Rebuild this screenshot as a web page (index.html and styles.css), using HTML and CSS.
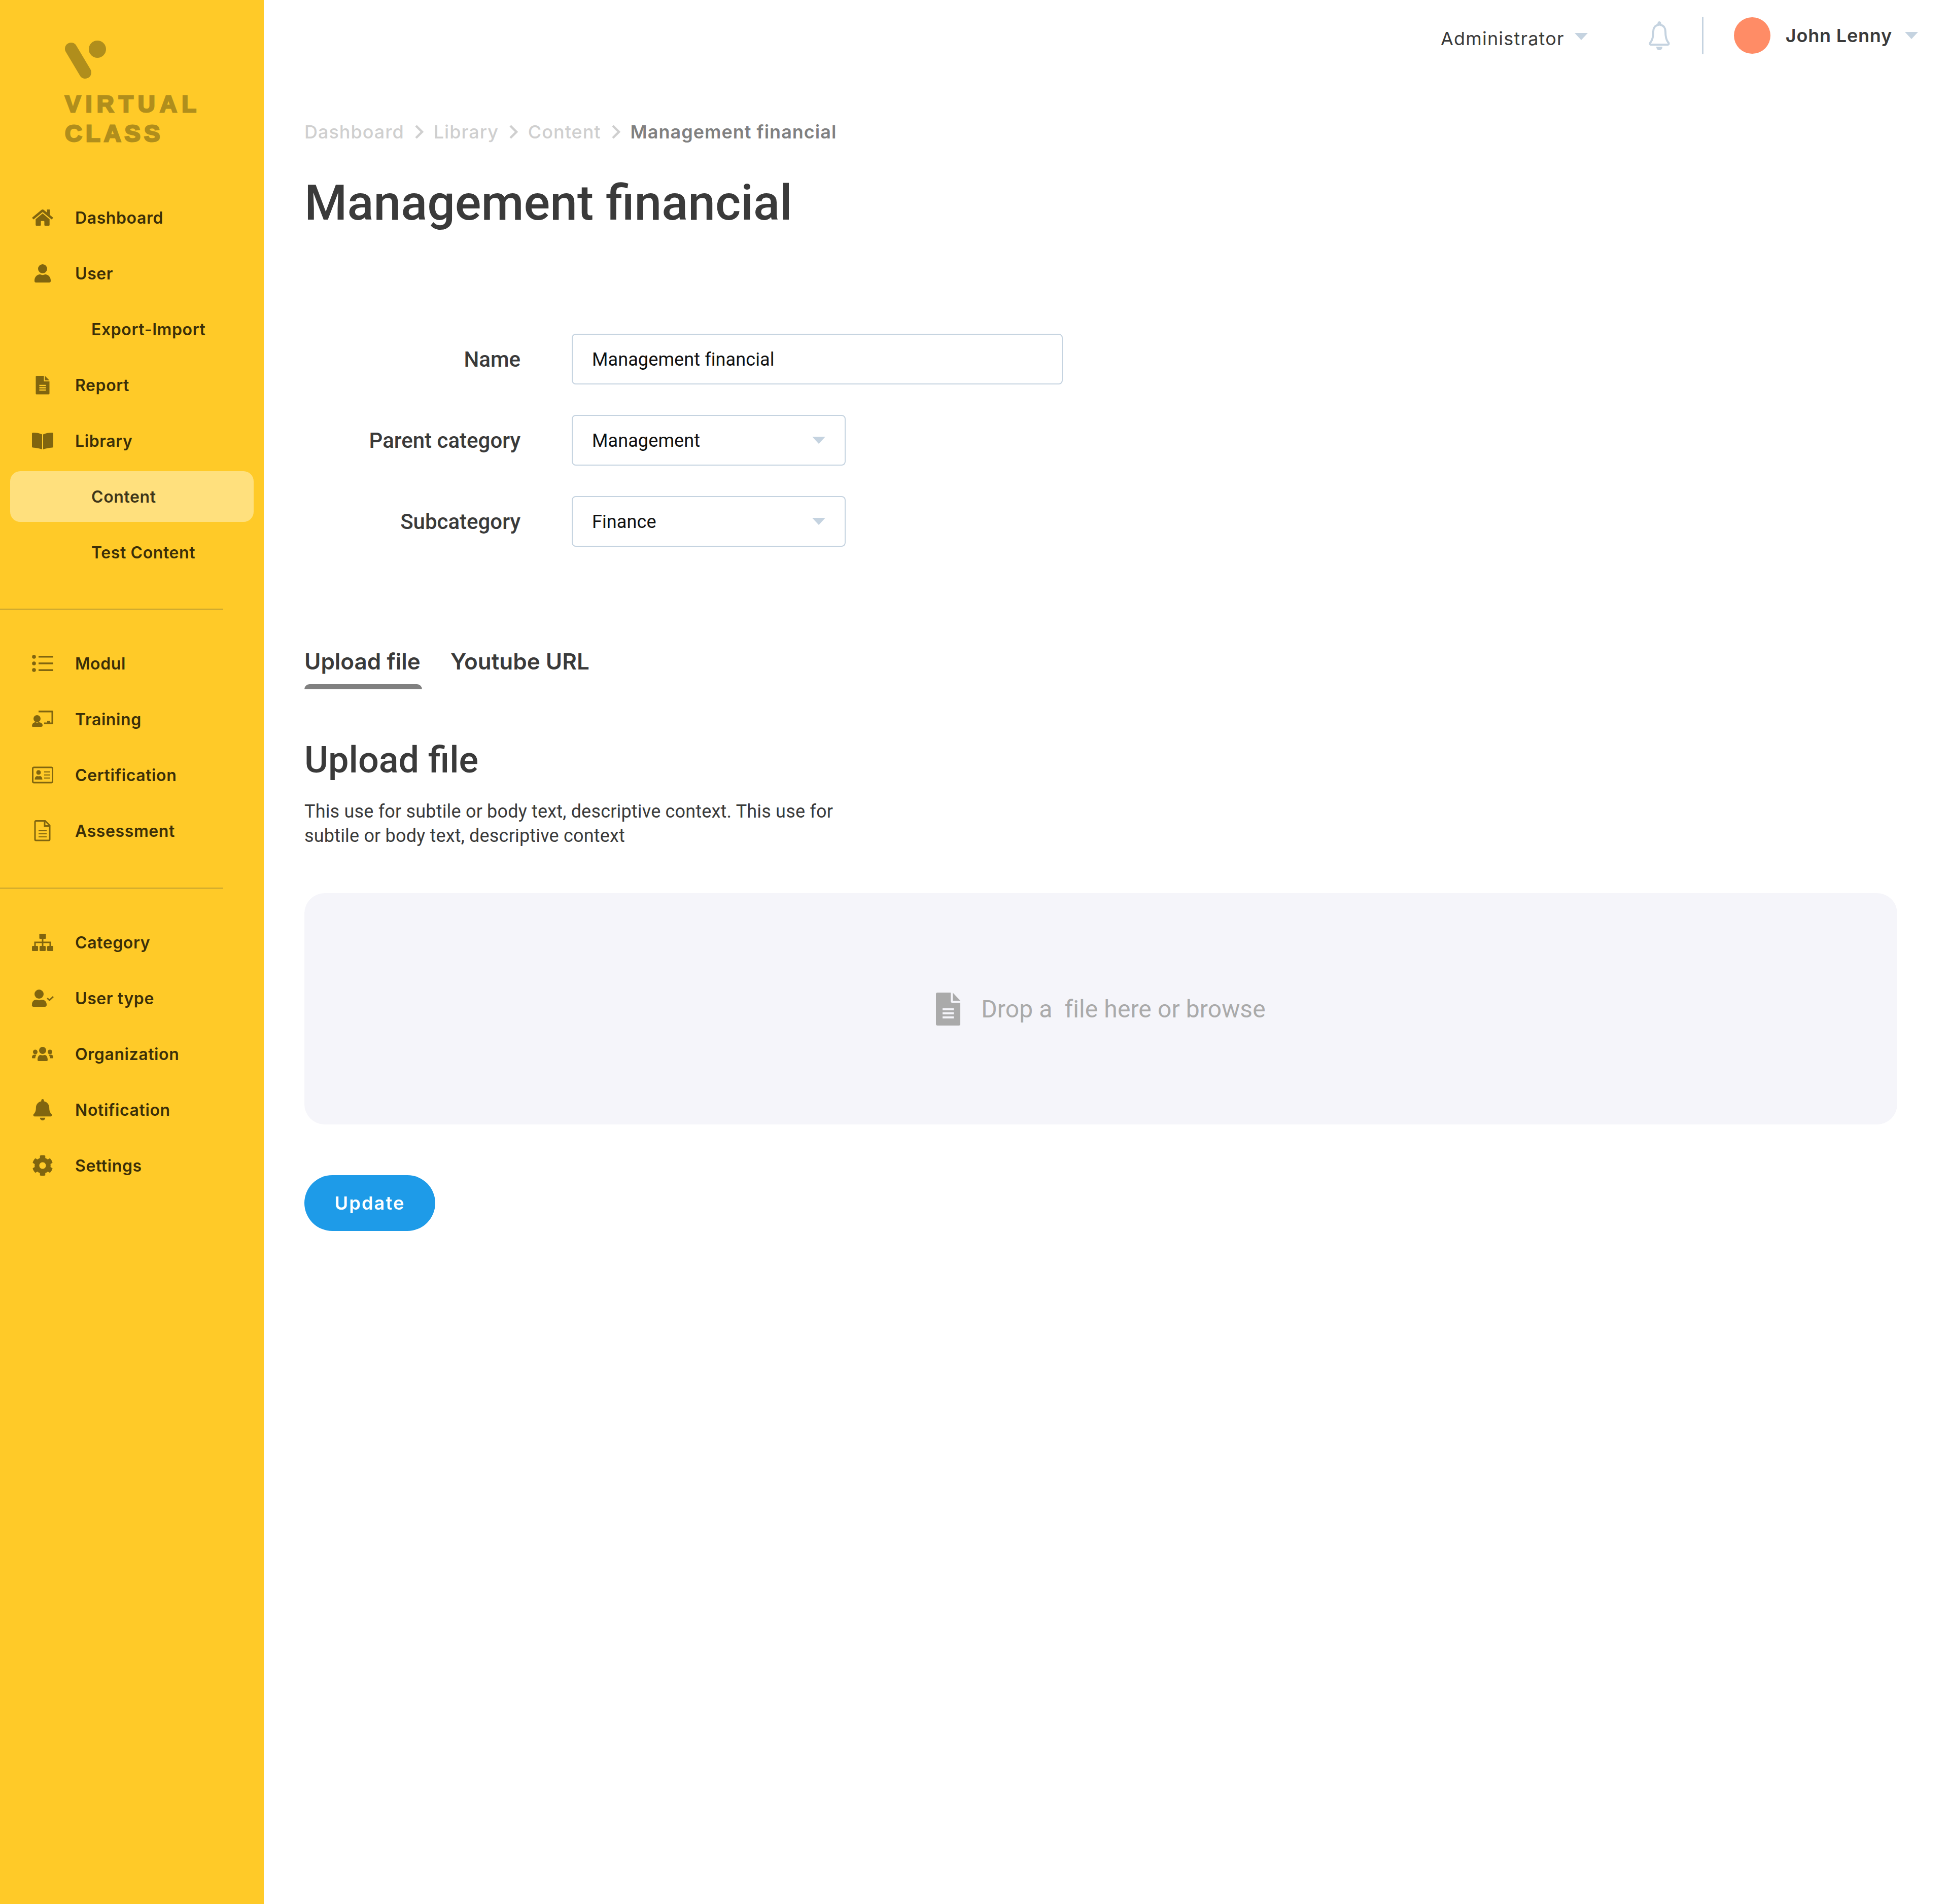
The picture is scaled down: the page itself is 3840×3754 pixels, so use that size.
FILE: index.html
```html
<!DOCTYPE html>
<html lang="en">
<head>
<meta charset="utf-8">
<title>Management financial</title>
<link rel="stylesheet" href="styles.css">
</head>
<body>
<div class="app">
  <aside class="sidebar">
    <div class="logo">
      <svg class="logo-mark" viewBox="0 0 84 78"><line class="logo-bar" x1="12" y1="16" x2="40" y2="63"/><circle class="logo-dot" cx="64" cy="17" r="17"/></svg>
      <div class="logo-text"><span class="logo-l1">VIRTUAL</span><br><span class="logo-l2">CLASS</span></div>
    </div>
    <nav class="nav">
      <a class="item"><svg class="ic" viewBox="-48 -80 672 672"><path d="M280.37 148.26L96 300.11V464a16 16 0 0 0 16 16l112.06-.29a16 16 0 0 0 15.92-16V368a16 16 0 0 1 16-16h64a16 16 0 0 1 16 16v95.64a16 16 0 0 0 16 16.05L464 480a16 16 0 0 0 16-16V300L295.67 148.26a12.19 12.19 0 0 0-15.3 0zM571.6 251.47L488 182.56V44.05a12 12 0 0 0-12-12h-56a12 12 0 0 0-12 12v72.61L318.47 43a48 48 0 0 0-61 0L4.34 251.47a12 12 0 0 0-1.6 16.9l25.5 31A12 12 0 0 0 45.15 301l235.22-193.74a12.19 12.19 0 0 1 15.3 0L530.9 301a12 12 0 0 0 16.9-1.6l25.5-31a12 12 0 0 0-1.7-16.93z"/></svg><span>Dashboard</span></a>
      <a class="item"><svg class="ic" viewBox="0 0 48 48"><circle cx="24" cy="15" r="9"/><path d="M8 38c0-7 5-12 11-12 3 1.5 7 1.5 10 0 6 0 11 5 11 12v1a3 3 0 0 1-3 3H11a3 3 0 0 1-3-3z"/></svg><span>User</span></a>
      <a class="item sub"><span>Export-Import</span></a>
      <a class="item"><svg class="ic" viewBox="0 0 48 48"><path d="M12 6h14.500v11h11v24a1.500 1.500 0 0 1-1.500 1.500H12a1.500 1.500 0 0 1-1.500-1.500V7.500A1.500 1.500 0 0 1 12 6zM28.500 6l9 9h-9z"/><path class="cut" d="M17.500 25h13M17.500 29.500h13M17.500 34h13"/></svg><span>Report</span></a>
      <a class="item"><svg class="ic" viewBox="0 0 48 48"><path d="M5 8c7 0 13 1 18 3.500V41c-5-2-11-3-18-3.500a2 2 0 0 1-2-2V10a2 2 0 0 1 2-2zM43 8c-7 0-13 1-18 3.500V41c5-2 11-3 18-3.500a2 2 0 0 0 2-2V10a2 2 0 0 0-2-2z"/></svg><span>Library</span></a>
      <a class="item sub active"><span>Content</span></a>
      <a class="item sub"><span>Test Content</span></a>
    </nav>
    <div class="rule"></div>
    <nav class="nav">
      <a class="item"><svg class="ic" viewBox="0 0 48 48"><circle cx="7" cy="11" r="3.800"/><circle cx="7" cy="24" r="3.800"/><circle cx="7" cy="37" r="3.800"/><rect x="16" y="9" width="29" height="3.500"/><rect x="16" y="22.200" width="29" height="3.500"/><rect x="16" y="35.500" width="29" height="3.500"/></svg><span>Modul</span></a>
      <a class="item"><svg class="ic" viewBox="0 0 48 48"><circle cx="13" cy="23" r="7"/><path d="M3 38c0-6 4-8 7-8 2 1 4.500 1 6 0 3.500 0 8 2 8 6a3 3 0 0 1-3 3H5a2 2 0 0 1-2-1zM16 7h27a2 2 0 0 1 2 2v23a2 2 0 0 1-2 2H27v-3.500h6V27h6v3.500h2.500V10.500H16z"/></svg><span>Training</span></a>
      <a class="item"><svg class="ic" viewBox="0 0 48 48"><rect class="line" x="4.500" y="9" width="39" height="30" rx="2.500"/><circle cx="16" cy="19" r="4.500"/><path d="M8.500 33c0-5 3-7 5-7 1.500.8 3.500.8 5 0 2 0 5 2 5 7z"/><path class="thin" d="M27 18h12M27 24h12M27 30h12"/></svg><span>Certification</span></a>
      <a class="item"><svg class="ic" viewBox="0 0 48 48"><path class="line" d="M11 4.500h18l9 9V41a2 2 0 0 1-2 2H11a2 2 0 0 1-2-2V6.500a2 2 0 0 1 2-2z"/><path class="line" d="M28 5v9.500h10"/><path class="thin" d="M16 24h16M16 30h16M16 36h16"/></svg><span>Assessment</span></a>
    </nav>
    <div class="rule rule-b"></div>
    <nav class="nav">
      <a class="item"><svg class="ic" viewBox="0 0 48 48"><rect x="17.500" y="7" width="13" height="10" rx="1.500"/><rect x="3" y="31" width="12" height="10" rx="1.500"/><rect x="18" y="31" width="12" height="10" rx="1.500"/><rect x="33" y="31" width="12" height="10" rx="1.500"/><path class="line" d="M24 17v14M9 31v-7h30v7"/></svg><span>Category</span></a>
      <a class="item"><svg class="ic" viewBox="0 0 48 48"><circle cx="17" cy="16" r="9"/><path d="M3 37c0-7 4-10 9-10 3 1.500 7 1.500 10 0 5 0 10 3 10 10a4 4 0 0 1-3 4H6a3 3 0 0 1-3-4z"/><path class="line" d="M33 24l4.500 4L45 21"/></svg><span>User type</span></a>
      <a class="item"><svg class="ic" viewBox="0 0 48 48"><circle cx="24" cy="17" r="7"/><circle cx="9.500" cy="20" r="4.500"/><circle cx="38.500" cy="20" r="4.500"/><path d="M14 36c0-7 3-10 6-10 3 1 5 1 8 0 3 0 6 3 6 10a2 2 0 0 1-2 2H16a2 2 0 0 1-2-2zM3 31c0-4 2-5.500 5-5.500h4c-1.500 2-2.500 4-2.500 7H4.500A1.500 1.500 0 0 1 3 31zM45 31c0-4-2-5.500-5-5.500h-4c1.500 2 2.500 4 2.500 7h5A1.500 1.500 0 0 0 45 31z"/></svg><span>Organization</span></a>
      <a class="item"><svg class="ic" viewBox="-68.500 -36.500 585 585"><path d="M224 512c35.32 0 63.97-28.65 63.97-64H160.03c0 35.35 28.65 64 63.97 64zm215.39-149.71c-19.32-20.76-55.47-51.99-55.47-154.29 0-77.7-54.48-139.9-127.94-155.16V32c0-17.67-14.32-32-31.98-32s-31.98 14.33-31.98 32v20.84C118.56 68.1 64.08 130.3 64.08 208c0 102.3-36.15 133.53-55.47 154.29-6 6.45-8.66 14.16-8.61 21.71.11 16.4 12.98 32 32.1 32h383.8c19.12 0 32-15.6 32.1-32 .05-7.55-2.61-15.27-8.61-21.71z"/></svg><span>Notification</span></a>
      <a class="item"><svg class="ic" viewBox="-36.500 -36.500 585 585"><path d="M487.4 315.7l-42.6-24.6c4.3-23.2 4.3-47 0-70.2l42.6-24.6c4.9-2.8 7.1-8.6 5.5-14-11.1-35.6-30-67.8-54.7-94.6-3.8-4.1-10-5.1-14.8-2.3L380.8 110c-17.9-15.4-38.5-27.3-60.8-35.1V25.800c0-5.600-3.900-10.500-9.400-11.700-36.700-8.200-74.300-7.800-109.200 0-5.500 1.200-9.400 6.100-9.400 11.700V75c-22.200 7.900-42.800 19.800-60.800 35.100L88.700 85.500c-4.900-2.800-11-1.900-14.800 2.300-24.700 26.700-43.600 58.900-54.700 94.600-1.700 5.400.6 11.200 5.500 14L67.300 221c-4.300 23.200-4.300 47 0 70.200l-42.600 24.600c-4.900 2.800-7.100 8.600-5.500 14 11.100 35.600 30 67.800 54.700 94.600 3.800 4.100 10 5.100 14.800 2.300l42.600-24.600c17.900 15.400 38.500 27.300 60.800 35.100v49.200c0 5.600 3.900 10.500 9.400 11.700 36.700 8.200 74.300 7.800 109.200 0 5.500-1.200 9.400-6.100 9.400-11.700v-49.200c22.200-7.900 42.800-19.800 60.800-35.100l42.600 24.600c4.900 2.800 11 1.900 14.800-2.300 24.700-26.700 43.600-58.900 54.700-94.600 1.500-5.500-.7-11.300-5.600-14.100zM256 336c-44.100 0-80-35.900-80-80s35.900-80 80-80 80 35.900 80 80-35.900 80-80 80z"/></svg><span>Settings</span></a>
    </nav>
  </aside>
  <main class="main">
    <header class="topbar">
      <span class="role">Administrator</span>
      <i class="tri role-tri"></i>
      <svg class="top-bell" viewBox="0 0 48 57"><path d="M24 2c-1.500 0-2 1.500-2 5-7 1.500-10 7-10 13 0 9-1 16-5 21-2 2-2 4.500 0 5h34c2-.5 2-3 0-5-4-5-5-12-5-21 0-6-3-11.500-10-13 0-3.500-.5-5-2-5z"/><path class="bell-clap" d="M18 50h12c0 4-2 7-6 7s-6-3-6-7z"/></svg>
      <div class="top-sep"></div>
      <div class="avatar"></div>
      <span class="user-name">John Lenny</span>
      <i class="tri user-tri"></i>
    </header>
    <div class="content">
      <div class="crumbs">
        <span>Dashboard</span><svg class="chev" viewBox="0 0 18 28"><path d="M3 2l12 12L3 26"/></svg>
        <span>Library</span><svg class="chev" viewBox="0 0 18 28"><path d="M3 2l12 12L3 26"/></svg>
        <span>Content</span><svg class="chev" viewBox="0 0 18 28"><path d="M3 2l12 12L3 26"/></svg>
        <span class="current">Management financial</span>
      </div>
      <h1 class="title">Management financial</h1>
      <form class="form">
        <div class="row"><label class="label">Name</label><div class="field wide">Management financial</div></div>
        <div class="row"><label class="label">Parent category</label><div class="field narrow">Management<i class="tri"></i></div></div>
        <div class="row"><label class="label">Subcategory</label><div class="field narrow">Finance<i class="tri"></i></div></div>
      </form>
      <div class="tabs">
        <div class="tab on">Upload file</div>
        <div class="tab">Youtube URL</div>
      </div>
      <h2 class="heading">Upload file</h2>
      <p class="desc">This use for subtile or body text, descriptive context. This use for<br>subtile or body text, descriptive context</p>
      <div class="drop">
        <svg class="drop-ic" viewBox="0 0 48 65"><path d="M3 0h26v17a3 3 0 0 0 3 3h16v42a3 3 0 0 1-3 3H3a3 3 0 0 1-3-3V3a3 3 0 0 1 3-3zM33 0l15 16H33z"/><path class="drop-lines" d="M13 33h22M13 41h22M13 49h22"/></svg>
        <span class="drop-text">Drop a &nbsp;file here or browse</span>
      </div>
      <button class="update" type="button">Update</button>
    </div>
  </main>
</div>
</body>
</html>
```

FILE: styles.css
```css
* { box-sizing: border-box; }
html, body { margin: 0; padding: 0; background: #fff; }
body { font-family: Roboto, "Liberation Sans", sans-serif; color: #3a3a3a; }
.app { display: flex; min-height: 3754px; }

.sidebar { width: 520px; flex: none; background: #ffca28; }
.logo { height: 374px; padding: 80px 0 0 128px; }
.logo-mark { display: block; width: 84px; height: 78px; }
.logo-bar { stroke: #b08e1c; stroke-width: 24; stroke-linecap: round; }
.logo-dot { fill: #b08e1c; }
.logo-text { margin-top: 18px; font: bold 47px/58px "Liberation Sans", sans-serif; color: #b08e1c; -webkit-text-stroke: 3px #b08e1c; }
.logo-l1 { letter-spacing: 9.200px; }
.logo-l2 { letter-spacing: 7px; }

.nav { display: flex; flex-direction: column; }
.item { display: flex; align-items: center; height: 100px; margin: 5px 20px; padding-left: 40px; font: 600 32px "Inter", sans-serif; letter-spacing: 0.6px; color: #3b2f08; border-radius: 20px; }
.item.sub { padding-left: 160px; }
.item.active { background: #ffe07d; color: #3d3519; }
.ic { width: 48px; height: 48px; margin-right: 40px; flex: none; fill: #80650f; }
.ic .cut { fill: none; stroke: #ffca28; stroke-width: 2.500; }
.ic .line { fill: none; stroke: #80650f; stroke-width: 3; }
.ic .thin { fill: none; stroke: #80650f; stroke-width: 2; }
.rule { width: 440px; height: 2px; margin: 56px 0 51px; background: #c4a22f; }
.rule-b { margin-top: 57px; }

.main { flex: 1; min-width: 0; }
.topbar { display: flex; align-items: center; justify-content: flex-end; height: 140px; padding-right: 59px; }
.role { margin-top: 11px; font: 400 36px "Inter", sans-serif; letter-spacing: 1.200px; color: #3a3a3a; }
.tri { display: block; width: 0; height: 0; border-left: 13px solid transparent; border-right: 13px solid transparent; border-top: 14px solid #c5d3e0; }
.role-tri { margin: 4px 0 0 20px; }
.top-bell { width: 48px; height: 57px; margin-left: 117px; fill: none; stroke: #c5d3e0; stroke-width: 4; }
.bell-clap { fill: #c5d3e0; stroke: none; }
.top-sep { width: 3px; height: 74px; margin-left: 60px; background: #c5d3e0; }
.avatar { width: 72px; height: 72px; margin-left: 60px; border-radius: 50%; background: #ff8c66; }
.user-name { margin-left: 30px; font: 600 36px "Inter", sans-serif; letter-spacing: 0.8px; color: #3a3a3a; }
.user-tri { margin: 0 0 0 25px; }

.content { padding: 0 100px 0 80px; }
.crumbs { display: flex; align-items: center; height: 44px; margin-top: 98px; font: 500 36px "Inter", sans-serif; letter-spacing: 1px; color: #cfcfcf; }
.current { color: #808080; font-weight: 600; }
.chev { width: 18px; height: 28px; margin: 0 20px; fill: none; stroke: #cfcfcf; stroke-width: 4.500; }
.title { margin: 58px 0 0; font: 500 96.500px/120px Roboto, sans-serif; color: #3a3a3a; }

.form { margin-top: 198px; display: flex; flex-direction: column; gap: 60px; }
.row { display: flex; align-items: center; height: 100px; }
.label { width: 426px; margin-right: 101px; text-align: right; font: 500 42px Roboto, sans-serif; color: #3a3a3a; }
.field { display: flex; align-items: center; justify-content: space-between; height: 100px; padding: 2px 38px 0; border: 2.500px solid #c5d3e0; border-radius: 8px; font: 400 36px Roboto, sans-serif; letter-spacing: 0.1px; color: #111; background: #fff; }
.field .tri { margin-top: -2px; }
.wide { width: 968px; }
.narrow { width: 540px; }

.tabs { display: flex; gap: 56px; margin-top: 200px; }
.tab { font: 600 44px/52px "Inter", sans-serif; color: #3a3a3a; white-space: nowrap; }
.tab.on { width: 232px; }
.tab.on::after { content: ""; display: block; height: 10px; margin-top: 19px; background: #808080; border-radius: 10px 10px 0 0; }
.heading { margin: 95px 0 0; font: 500 72px/90px Roboto, sans-serif; color: #3a3a3a; }
.desc { margin: 32px 0 0; font: 400 36px/48px Roboto, sans-serif; letter-spacing: 0.18px; color: #3a3a3a; }
.drop { display: flex; align-items: center; justify-content: center; gap: 41px; height: 456px; margin-top: 89px; border-radius: 40px; background: #f5f5fa; }
.drop-ic { width: 48px; height: 65px; fill: #aaaaaa; }
.drop-lines { fill: none; stroke: #f5f5fa; stroke-width: 4; }
.drop-text { font: 400 48px Roboto, sans-serif; letter-spacing: 0.1px; color: #aaaaaa; }
.update { display: block; width: 258px; height: 110px; margin-top: 100px; padding: 0; border: 0; border-radius: 55px; background: #1e9be8; color: #fff; font: 600 36px "Inter", sans-serif; letter-spacing: 2.200px; }
```
